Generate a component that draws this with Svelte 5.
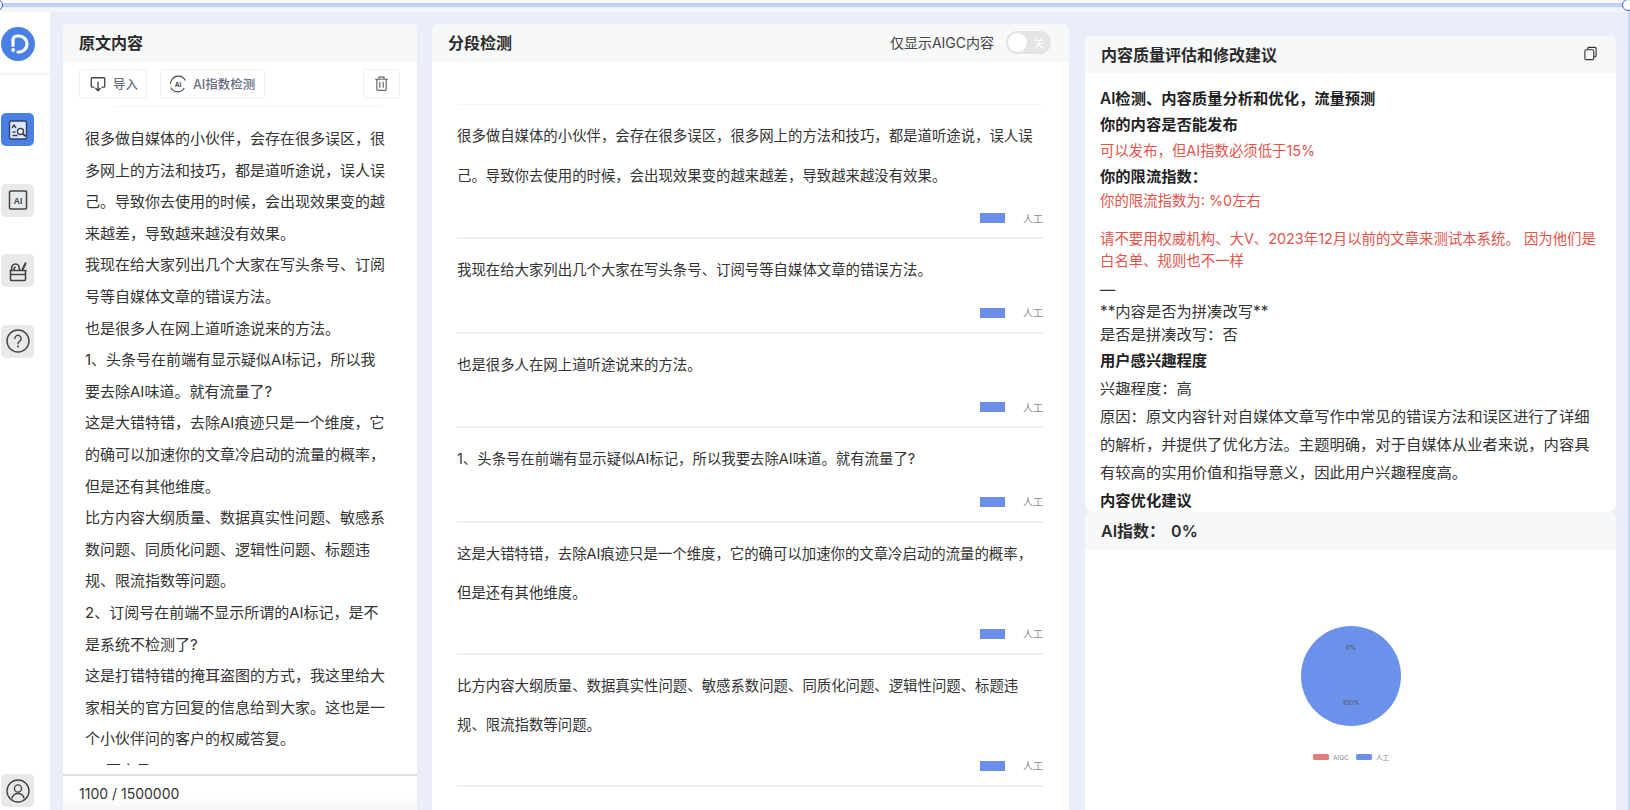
<script>
  const leftLines = [
    '很多做自媒体的小伙伴，会存在很多误区，很多网上的方法和技巧，都是道听途说，误人误己。导致你去使用的时候，会出现效果变的越来越差，导致越来越没有效果。',
    '我现在给大家列出几个大家在写头条号、订阅号等自媒体文章的错误方法。',
    '也是很多人在网上道听途说来的方法。',
    '1、头条号在前端有显示疑似AI标记，所以我要去除AI味道。就有流量了?',
    '这是大错特错，去除AI痕迹只是一个维度，它的确可以加速你的文章冷启动的流量的概率，但是还有其他维度。',
    '比方内容大纲质量、数据真实性问题、敏感系数问题、同质化问题、逻辑性问题、标题违规、限流指数等问题。',
    '2、订阅号在前端不显示所谓的AI标记，是不是系统不检测了?',
    '这是打错特错的掩耳盗图的方式，我这里给大家相关的官方回复的信息给到大家。这也是一个小伙伴问的客户的权威答复。',
    '1、百家号'
  ];
  const segments = leftLines.slice(0, 6);
</script>

<div class="strip"></div>
<span class="handle hl"></span>
<span class="handle hr"></span>

<div class="page">
  <aside class="side">
    <div class="logo">
      <svg viewBox="0 0 34 34" width="34" height="34">
        <circle cx="17" cy="17" r="17" fill="#4a80e4" />
        <path d="M12 18.500V13a4 4 0 0 1 4-4h2a8 8 0 0 1 0 16h-1" fill="none" stroke="#fff" stroke-width="3.200" stroke-linecap="round" />
        <circle cx="12.200" cy="23" r="1.900" fill="#fff" />
      </svg>
    </div>
    <nav class="nav">
      <button class="nb active" aria-label="检测">
        <svg viewBox="0 0 24 24" width="24" height="24" fill="none" stroke="#33415c" stroke-width="1.400">
          <rect x="3.500" y="3" width="17" height="18" rx="1.500" fill="#dfe6f5" />
          <path d="M6 10l2-3 2 3M6.500 17.500h5M6.500 14h3" />
          <circle cx="14.500" cy="13.500" r="3" fill="#fff" />
          <path d="M16.700 15.700l3 2.600" stroke-width="1.800" />
        </svg>
      </button>
      <button class="nb" aria-label="AI">
        <svg viewBox="0 0 24 24" width="24" height="24" fill="none" stroke="#444" stroke-width="1.500">
          <rect x="3.500" y="3" width="17" height="18" rx="1" />
          <text x="12" y="15.500" text-anchor="middle" class="ai" stroke="none" fill="#444">AI</text>
        </svg>
      </button>
      <button class="nb" aria-label="工具">
        <svg viewBox="0 0 24 24" width="24" height="24" fill="none" stroke="#444" stroke-width="1.600">
          <path d="M3.500 11.500h17M4.500 11.500V20.500a1 1 0 0 0 1 1h13a1 1 0 0 0 1-1v-9M4.500 15.500h15" />
          <path d="M5.500 11c0-4 2-6 4-6s4 2 4 6M8 11c0-2 .7-3 1.700-3" />
          <path d="M16.500 10.500l3-6" stroke-width="2.200" stroke-linecap="round" />
        </svg>
      </button>
      <button class="nb" aria-label="帮助">
        <svg viewBox="0 0 24 24" width="24" height="24" fill="none" stroke="#444" stroke-width="1.400">
          <circle cx="12" cy="12" r="11" />
          <path d="M8.800 9.500a3.200 3.200 0 1 1 4.800 2.800c-1 .6-1.600 1.200-1.600 2.400" stroke-linecap="round" />
          <circle cx="12" cy="17.500" r="1" fill="#444" stroke="none" />
        </svg>
      </button>
    </nav>
    <button class="nb user" aria-label="用户">
      <svg viewBox="0 0 24 24" width="24" height="24" fill="none" stroke="#444" stroke-width="1.400">
        <circle cx="12" cy="12" r="11" />
        <circle cx="12" cy="9.500" r="3.600" />
        <path d="M5.800 19.500c1-3.500 3.500-5 6.200-5s5.200 1.500 6.200 5" />
      </svg>
    </button>
  </aside>

  <main class="main">
    <section class="card left">
      <header class="head"><h2>原文内容</h2></header>
      <div class="tools">
        <button class="tb import">
          <svg viewBox="0 0 20 20" width="18" height="18" fill="none" stroke="#444" stroke-width="1.500">
            <path d="M6 13.500H3.500a1 1 0 0 1-1-1V4a1 1 0 0 1 1-1h13a1 1 0 0 1 1 1v8.500a1 1 0 0 1-1 1H14" />
            <path d="M10 7.500v10M7 14.500l3 3 3-3" />
          </svg>
          导入
        </button>
        <button class="tb detect">
          <svg viewBox="0 0 20 20" width="18" height="18" fill="none" stroke="#444" stroke-width="1.200">
            <path d="M3 5.500A8.500 8.500 0 0 1 18 6M17 14.500A8.500 8.500 0 0 1 2 14M1.600 10A8.500 8.500 0 0 1 3 5.500" />
            <text x="10" y="13.200" text-anchor="middle" class="ai2" stroke="none" fill="#444">AI</text>
          </svg>
          AI指数检测
        </button>
        <button class="tb trash" aria-label="删除">
          <svg viewBox="0 0 20 20" width="17" height="17" fill="none" stroke="#666" stroke-width="1.400">
            <path d="M2.500 5h15M7 5V2.500h6V5M4.500 5v12a1 1 0 0 0 1 1h9a1 1 0 0 0 1-1V5M8 8v7M12 8v7" />
          </svg>
        </button>
      </div>
      <div class="rule"></div>
      <div class="source">
        {#each leftLines as line}<p>{line}</p>{/each}
      </div>
      <footer class="count">1100 / 1500000</footer>
    </section>

    <section class="card mid">
      <header class="head">
        <h2>分段检测</h2>
        <div class="filter">
          <span>仅显示AIGC内容</span>
          <span class="toggle"><i></i><b>关</b></span>
        </div>
      </header>
      <div class="segments">
        {#each segments as seg}
          <article class="seg">
            <p>{seg}</p>
            <div class="tag"><i></i><span>人工</span></div>
          </article>
        {/each}
      </div>
    </section>

    <div class="rightcol">
      <section class="card report">
        <header class="head rh">
          <h2>内容质量评估和修改建议</h2>
          <svg viewBox="0 0 16 16" width="15" height="15" fill="none" stroke="#333" stroke-width="1.200">
            <rect x="2" y="4" width="9.500" height="10.500" rx="1.500" />
            <path d="M5 4V2.800A1.300 1.300 0 0 1 6.300 1.500h6.400A1.300 1.300 0 0 1 14 2.800v7.400a1.300 1.300 0 0 1-1.300 1.300h-1.200" />
          </svg>
        </header>
        <div class="body">
          <p class="b l26">AI检测、内容质量分析和优化，流量预测</p>
          <p class="b l26">你的内容是否能发布</p>
          <p class="r l26">可以发布，但AI指数必须低于15%</p>
          <p class="b l25">你的限流指数：</p>
          <p class="r l24">你的限流指数为: %0左右</p>
          <p class="r warn">请不要用权威机构、大V、2023年12月以前的文章来测试本系统。 因为他们是白名单、规则也不一样</p>
          <p class="dash">—</p>
          <p class="l22">**内容是否为拼凑改写**</p>
          <p class="l24">是否是拼凑改写：否</p>
          <p class="b l28">用户感兴趣程度</p>
          <p class="l28">兴趣程度：高</p>
          <p class="l28">原因：原文内容针对自媒体文章写作中常见的错误方法和误区进行了详细的解析，并提供了优化方法。主题明确，对于自媒体从业者来说，内容具有较高的实用价值和指导意义，因此用户兴趣程度高。</p>
          <p class="b l28">内容优化建议</p>
        </div>
      </section>
      <section class="card score">
        <header class="head sh"><h2>AI指数： 0%</h2></header>
        <div class="chart">
          <svg viewBox="0 0 140 190" width="140" height="190">
            <circle cx="70" cy="70" r="50" fill="#6c91ea" />
            <text x="70" y="44" class="lbl">0%</text>
            <text x="70" y="99" class="lbl">100%</text>
            <rect x="32" y="148" width="16" height="6" rx="1.500" fill="#e27d7d" />
            <text x="52" y="153.500" class="leg">AIGC</text>
            <rect x="75" y="148" width="16" height="6" rx="1.500" fill="#6c91ea" />
            <text x="95" y="153.500" class="leg">人工</text>
          </svg>
        </div>
      </section>
    </div>
  </main>
</div>

<style>
  :global(body) {
    margin: 0;
    background: #e9eef8;
    overflow: hidden;
    font-family: Inter, "Noto Sans CJK SC", sans-serif;
    color: #333;
  }
  .strip {
    height: 4px;
    margin-top: 3px;
    background: #c3d0f5;
    box-shadow: 0 -3px 0 #f7f8fb, 0 5px 0 #f3f5f9;
  }
  .handle {
    position: absolute;
    top: -1px;
    width: 12px;
    height: 12px;
    border-radius: 50%;
    border: 1.500px solid #3f68e0;
    background: #fff;
    box-sizing: border-box;
  }
  .hl { left: -9px; }
  .hr { right: -4px; }
  .page {
    display: flex;
    height: 803px;
    overflow: hidden;
    border-right: 2px solid #c9d5f4;
  }
  .side {
    width: 50px;
    flex: none;
    margin-top: 5px;
    background: #fff;
    display: flex;
    flex-direction: column;
    padding-left: 1px;
    box-sizing: border-box;
  }
  .logo {
    height: 46px;
    padding-top: 15px;
    margin-left: -1px;
    padding-left: 1px;
    border-bottom: 2px solid #f2f4f8;
  }
  .logo svg { display: block; }
  .nav {
    display: flex;
    flex-direction: column;
    gap: 37.500px;
    margin-top: 38px;
  }
  .nb {
    width: 33px;
    height: 33px;
    border: 0;
    padding: 0;
    border-radius: 5px;
    background: #e8e9eb;
    display: flex;
    align-items: center;
    justify-content: center;
  }
  .active { background: #4a80e4; }
  .user { margin-top: auto; margin-bottom: 3px; }
  .ai { font: 700 8.500px "Liberation Sans", sans-serif; }
  .ai2 { font: 700 7.500px "Liberation Sans", sans-serif; }
  .main {
    flex: 1;
    display: flex;
    min-width: 0;
    padding-left: 13px;
  }
  .card {
    background: #fff;
    border-radius: 6px 6px 0 0;
    display: flex;
    flex-direction: column;
    overflow: hidden;
  }
  .left { width: 354px; margin-top: 17px; }
  .mid { width: 637px; margin: 17px 0 0 15px; }
  .head {
    height: 36px;
    padding: 0 16px 2px 16px;
    flex: none;
    background: #f7f8f9;
    display: flex;
    align-items: center;
    justify-content: space-between;
  }
  h2 {
    margin: 0;
    font-size: 16px;
    font-weight: 600;
    color: #2b2b2b;
  }
  .tools {
    display: flex;
    gap: 13px;
    padding: 7px 17px 0 16px;
  }
  .tb {
    height: 29px;
    box-sizing: border-box;
    background: #fff;
    border: 1px solid #edf0f6;
    border-radius: 2px;
    display: flex;
    align-items: center;
    gap: 6px;
    font: 500 12.500px Inter, "Noto Sans CJK SC", sans-serif;
    color: #666c80;
    padding: 0;
  }
  .import { width: 68px; padding-left: 9px; }
  .detect { width: 105px; padding-left: 8px; }
  .trash { width: 37px; margin-left: auto; justify-content: center; }
  .rule {
    height: 1px;
    margin: 8px 35px 0 52px;
    background: #f2f3f5;
    flex: none;
  }
  .source {
    flex: 1;
    min-height: 0;
    overflow: hidden;
    margin: 0 27px 9px 22px;
    padding-top: 16px;
    font-size: 15px;
    line-height: 31.600px;
    color: #333;
  }
  .source p, .seg p, .body p { margin: 0; }
  .count {
    height: 36px;
    flex: none;
    box-sizing: border-box;
    border-top: 2px solid #dedfe1;
    padding-left: 16px;
    display: flex;
    align-items: center;
    font-size: 14px;
    color: #333;
    background: linear-gradient(#fff 60%, #f6f6f6);
  }
  .filter {
    display: flex;
    align-items: center;
    gap: 12px;
    font-size: 14px;
    color: #444;
    margin-right: 1px;
  }
  .toggle {
    width: 45px;
    height: 23px;
    border-radius: 12px;
    background: #e4e4e7;
    position: relative;
    display: block;
    margin-right: 1px;
  }
  .toggle i {
    position: absolute;
    left: 2px;
    top: 2px;
    width: 19px;
    height: 19px;
    border-radius: 50%;
    background: #fff;
  }
  .toggle b {
    position: absolute;
    right: 6px;
    top: 3px;
    font: 400 12px/17px "Noto Sans CJK SC", sans-serif;
    color: #fff;
  }
  .segments {
    padding: 43px 26px 0 25px;
    background: #fff;
  }
  .seg {
    border-bottom: 2px solid #eeeff1;
    padding-top: 11px;
  }
  .seg:first-child { box-shadow: 0 -1px 0 #f4f5f7; }
  .seg p {
    font-size: 14.400px;
    line-height: 39.500px;
    color: #333;
  }
  .tag {
    display: flex;
    align-items: center;
    justify-content: flex-end;
    height: 24px;
    margin-top: 11px;
    margin-bottom: 7px;
    gap: 18px;
    font-size: 10px;
    color: #888;
  }
  .seg:nth-child(n+5) .tag { margin-top: 9px; }
  .tag i {
    width: 25px;
    height: 10px;
    background: #6c8eea;
  }
  .rightcol {
    width: 531px;
    margin: 29px 0 0 16px;
    display: flex;
    flex-direction: column;
  }
  .report { height: 476px; flex: none; border-radius: 6px 6px 8px 8px; }
  .rh { height: 35px; padding-right: 18px; }
  .body {
    padding: 13px 16px 0 15px;
    font-size: 15.300px;
    overflow: hidden;
    color: #333;
  }
  .b { font-weight: 600; color: #222; }
  .r { color: #e5534b; font-size: 14.400px; }
  .l22 { line-height: 22px; }
  .l24 { line-height: 24px; }
  .l25 { line-height: 25px; }
  .l26 { line-height: 26px; }
  .l28 { line-height: 28px; }
  .warn { line-height: 22px; margin-top: 15px !important; }
  .dash { line-height: 22px; margin-top: 7px !important; }
  .score { flex: 1; border-radius: 6px 6px 0 0; }
  .sh { height: 36px; }
  .sh h2 { word-spacing: 2px; }
  .chart {
    display: flex;
    justify-content: center;
    padding-top: 56px;
  }
  .lbl {
    font: 6.500px Inter, "Noto Sans CJK SC", sans-serif;
    fill: #555;
    text-anchor: middle;
  }
  .leg {
    font: 6.500px Inter, "Noto Sans CJK SC", sans-serif;
    fill: #888;
  }
</style>
